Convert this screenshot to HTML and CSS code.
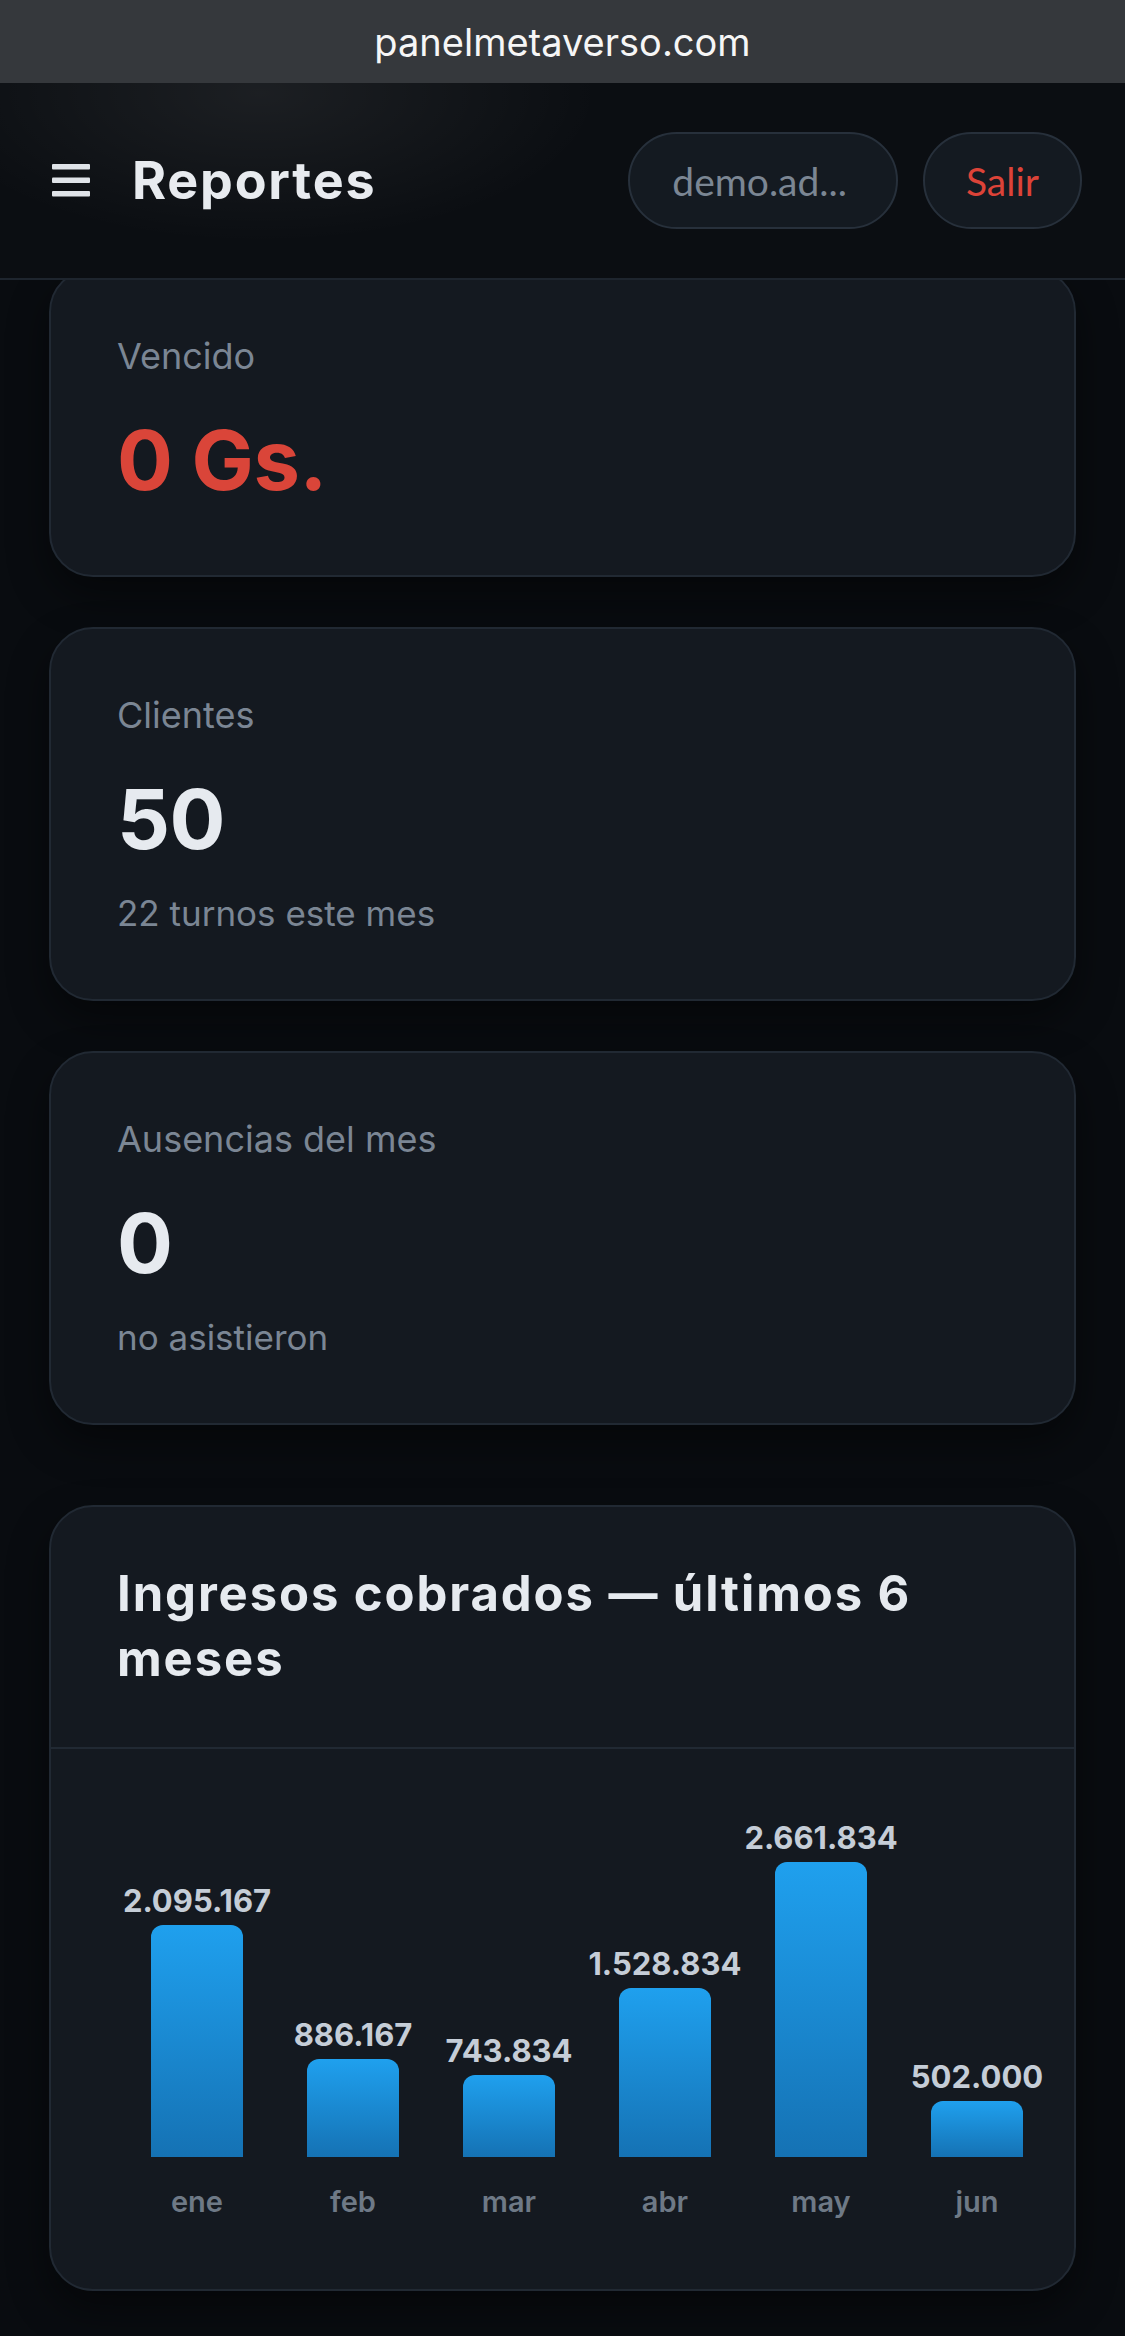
FILE: index.html
```html
<!DOCTYPE html>
<html lang="es">
<head>
    <meta charset="UTF-8">
    <meta name="viewport" content="width=device-width, initial-scale=1.0">
    <title>Reportes</title>
    <link rel="stylesheet" href="styles.css">
</head>
<body>
    <div class="urlbar">panelmetaverso.com</div>

    <header class="topbar">
        <button class="menu-btn" aria-label="Menú">
            <svg width="38" height="33" viewBox="0 0 38 33">
                <rect x="0" y="0" width="38" height="5.5" rx="1" fill="#dfe3e8"/>
                <rect x="0" y="13.5" width="38" height="5.5" rx="1" fill="#dfe3e8"/>
                <rect x="0" y="27" width="38" height="5.5" rx="1" fill="#dfe3e8"/>
            </svg>
        </button>
        <h1 class="page-title">Reportes</h1>
        <div class="user-actions">
            <span class="pill user-pill">demo.ad...</span>
            <button class="pill logout">Salir</button>
        </div>
    </header>

    <main class="content">
        <section class="stats">
            <div class="card stat">
                <div class="stat-label">Vencido</div>
                <div class="stat-value danger">0 Gs.</div>
            </div>
            <div class="card stat">
                <div class="stat-label">Clientes</div>
                <div class="stat-value">50</div>
                <div class="stat-sub">22 turnos este mes</div>
            </div>
            <div class="card stat">
                <div class="stat-label">Ausencias del mes</div>
                <div class="stat-value">0</div>
                <div class="stat-sub">no asistieron</div>
            </div>
        </section>

        <section class="card chart-card">
            <div class="chart-head">
                <h2>Ingresos cobrados — últimos 6 meses</h2>
            </div>
            <div class="chart-body">
                <div class="bars">
                    <div class="bar-col">
                        <div class="plot">
                            <span class="bar-val">2.095.167</span>
                            <div class="bar" style="height: 232px"></div>
                        </div>
                        <span class="bar-month">ene</span>
                    </div>
                    <div class="bar-col">
                        <div class="plot">
                            <span class="bar-val">886.167</span>
                            <div class="bar" style="height: 98px"></div>
                        </div>
                        <span class="bar-month">feb</span>
                    </div>
                    <div class="bar-col">
                        <div class="plot">
                            <span class="bar-val">743.834</span>
                            <div class="bar" style="height: 82px"></div>
                        </div>
                        <span class="bar-month">mar</span>
                    </div>
                    <div class="bar-col">
                        <div class="plot">
                            <span class="bar-val">1.528.834</span>
                            <div class="bar" style="height: 169px"></div>
                        </div>
                        <span class="bar-month">abr</span>
                    </div>
                    <div class="bar-col">
                        <div class="plot">
                            <span class="bar-val">2.661.834</span>
                            <div class="bar" style="height: 295px"></div>
                        </div>
                        <span class="bar-month">may</span>
                    </div>
                    <div class="bar-col">
                        <div class="plot">
                            <span class="bar-val">502.000</span>
                            <div class="bar" style="height: 56px"></div>
                        </div>
                        <span class="bar-month">jun</span>
                    </div>
                </div>
            </div>
        </section>
    </main>
</body>
</html>
```

FILE: styles.css
```css
*{
    box-sizing: border-box;
}

body{
    margin: 0;
    background-color: #090c10;
    font-family: Inter, "Noto Sans", sans-serif;
    color: #e6eaef;
}

.urlbar{
    height: 83px;
    display: flex;
    align-items: center;
    justify-content: center;
    background-color: #35383c;
    color: #f6f6f6;
    font-size: 38px;
}

.topbar{
    position: relative;
    z-index: 2;
    height: 197px;
    display: flex;
    align-items: center;
    padding: 0 43px 0 52px;
    border-bottom: 2px solid #1e252e;
    background:
        radial-gradient(ellipse 340px 150px at 260px 10px, rgba(255, 255, 255, 0.07), transparent),
        #0b0e12;
}

.menu-btn{
    display: flex;
    width: 38px;
    height: 33px;
    padding: 0;
    margin-right: 42px;
    border: 0;
    background: none;
}

.page-title{
    margin: 0;
    font-size: 52px;
    font-weight: 700;
    letter-spacing: 1.8px;
    color: #e8ebef;
}

.user-actions{
    margin-left: auto;
    display: flex;
    gap: 25px;
}

.pill{
    height: 97px;
    display: flex;
    align-items: center;
    padding: 0 41px;
    border: 2px solid #27303b;
    border-radius: 49px;
    background-color: #141a21;
    font-family: Lato, Inter, sans-serif;
    font-size: 39px;
}

.user-pill{
    padding: 0 49px 0 42px;
    color: #7b8693;
}

.logout{
    color: #dc4338;
}

.content{
    margin-top: -12px;
    padding: 0 49px 44px;
    display: flex;
    flex-direction: column;
    gap: 80px;
}

.stats{
    display: flex;
    flex-direction: column;
    gap: 50px;
}

.card{
    border: 2px solid #212933;
    border-radius: 44px;
    background-color: #141920;
    box-shadow: 0 18px 40px rgba(0, 0, 0, 0.45);
}

.stat{
    padding: 66px;
}

.stat-label{
    font-size: 36px;
    line-height: 1.15;
    color: #7b8694;
}

.stat-value{
    margin-top: 36px;
    font-size: 83px;
    font-weight: 700;
    line-height: 1.15;
    letter-spacing: -0.5px;
    color: #e6eaef;
}

.stat-value.danger{
    color: #da4539;
}

.stat-sub{
    margin-top: 25px;
    font-size: 35px;
    line-height: 1.15;
    color: #7b8694;
}

.chart-head{
    padding: 54px 66px 56px;
    border-bottom: 2px solid #212933;
}

.chart-head h2{
    margin: 0;
    font-size: 49px;
    font-weight: 700;
    line-height: 65px;
    letter-spacing: 1.9px;
    color: #e6eaef;
}

.chart-body{
    padding: 30px 0 69px 68px;
}

.bars{
    display: grid;
    grid-template-columns: repeat(6, 156px);
}

.bar-col{
    display: flex;
    flex-direction: column;
    align-items: center;
}

.plot{
    height: 378px;
    display: flex;
    flex-direction: column;
    justify-content: flex-end;
    align-items: center;
}

.bar-val{
    margin-bottom: 6px;
    font-size: 31px;
    font-weight: 700;
    line-height: 1.2;
    color: #c5cdd7;
}

.bar{
    width: 92px;
    border-radius: 12px 12px 0 0;
    background: linear-gradient(180deg, #1fa0ee, #1572b4);
}

.bar-month{
    margin-top: 28px;
    font-size: 29px;
    font-weight: 600;
    line-height: 1.2;
    color: #6e7986;
}
```
